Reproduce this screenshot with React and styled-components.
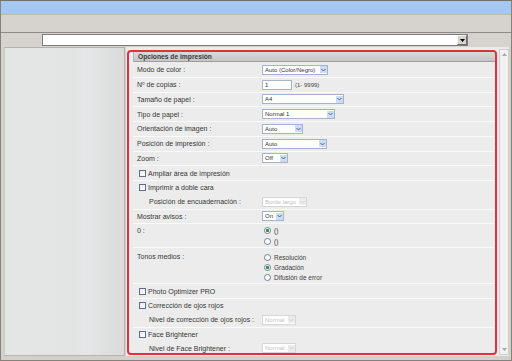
import React from "react";
import styled, { createGlobalStyle } from "styled-components";

const GlobalStyle = createGlobalStyle`
  html, body {
    margin: 0;
    padding: 0;
    background: #d4d0c8;
  }
  body {
    font-family: "Liberation Sans", Arial, sans-serif;
  }
`;

const Window = styled.div`
  box-sizing: border-box;
  width: 512px;
  height: 361px;
  display: flex;
  flex-direction: column;
  background: #d4d0c8;
  border: 1px solid #85827d;
  border-top-color: #6f6f6f;
  overflow: hidden;
`;

const TitleBar = styled.div`
  flex: 0 0 13px;
  height: 13px;
  background: #a5c7f1;
  border-bottom: 1px solid #bdb9b3;
`;

const ToolBand = styled.div`
  flex-shrink: 0;
  height: 17px;
  background: #d6d3ce;
  border-bottom: 1px solid #8e8c89;
`;

const ComboRow = styled.div`
  flex-shrink: 0;
  height: 14px;
  display: flex;
  align-items: center;
  padding-left: 41px;
  background: #d6d3ce;
`;

const ComboBox = styled.div`
  box-sizing: border-box;
  width: 426px;
  height: 12px;
  display: flex;
  justify-content: flex-end;
  background: #fff;
  border: 1px solid #7c7c7c;
`;

const ComboButton = styled.div`
  box-sizing: border-box;
  width: 10px;
  height: 10px;
  display: flex;
  align-items: center;
  justify-content: center;
  background: #d6d3ce;
  border: 1px solid #f4f4f4;
  border-right-color: #6d6d6d;
  border-bottom-color: #6d6d6d;
`;

const Body = styled.div`
  flex: 1;
  display: flex;
  gap: 1px;
  padding: 0 2px 4px 3px;
  min-height: 0;
`;

const LeftPane = styled.div`
  box-sizing: border-box;
  width: 121px;
  background: linear-gradient(
    to right,
    #e4e5e5 0%,
    #e3e4e4 60%,
    #e6e7e8 68%,
    #e1e2e2 78%,
    #dbdbdb 100%
  );
  border: 1px solid #b3b3b3;
  border-left-color: #c9c9c9;
`;

const ContentArea = styled.div`
  flex: 1;
  display: flex;
  background: #ebebeb;
`;

const Panel = styled.div`
  box-sizing: border-box;
  flex: 1;
  margin: 3px 2px 1px 1px;
  padding-left: 4px;
  border: 2px solid #e3303d;
  border-radius: 4px;
  background: #ececec;
  display: flex;
  flex-direction: column;
  overflow: hidden;
`;

const Header = styled.div`
  flex-shrink: 0;
  height: 9px;
  line-height: 9px;
  padding-left: 4px;
  font-size: 6.7px;
  font-weight: bold;
  color: #3a3a3a;
  background: linear-gradient(#dadada, #c6c6c6);
  border-left: 1px solid #b5b5b5;
  border-bottom: 1px solid #9f9f9f;
`;

const Group = styled.div`
  flex-shrink: 0;
  border-top: 1px solid ${(p) => (p.$first ? "transparent" : "#fafafa")};
`;

const Line = styled.div`
  display: grid;
  grid-template-columns: 125px 1fr;
  align-items: center;
  height: 13.75px;
  padding-left: 4px;
`;

const Label = styled.span`
  padding-left: ${(p) => p.$indent || 0}px;
  font-size: 7px;
  color: #363636;
  white-space: nowrap;
`;

const Value = styled.div`
  display: flex;
  align-items: center;
  gap: 3px;
`;

const Select = styled.div`
  box-sizing: border-box;
  width: ${(p) => p.$w}px;
  height: 10px;
  display: flex;
  align-items: center;
  padding-left: 2px;
  background: #fff;
  border: 1px solid ${(p) => (p.$disabled ? "#d6d6d6" : "#a2b4d0")};
  font-size: 6px;
  color: ${(p) => (p.$disabled ? "#c2c2c2" : "#333")};
  white-space: nowrap;
`;

const Arrow = styled.span`
  margin-left: auto;
  margin-right: 0.5px;
  width: 7px;
  height: 7px;
  display: flex;
  align-items: center;
  justify-content: center;
  background: ${(p) => (p.$disabled ? "#ececec" : "#cddcf3")};
`;

const TextInput = styled.div`
  box-sizing: border-box;
  width: 30px;
  height: 10px;
  display: flex;
  align-items: center;
  padding-left: 2px;
  background: #fff;
  border: 1px solid #a7b5cb;
  font-size: 6px;
  color: #333;
`;

const Hint = styled.span`
  font-size: 6px;
  color: #444;
`;

const CheckLine = styled.div`
  display: flex;
  align-items: center;
  gap: 2px;
  height: 13.75px;
  padding-left: 6px;
`;

const Box = styled.span`
  box-sizing: border-box;
  width: 7px;
  height: 7px;
  border: 1px solid #5d6e8f;
  background: linear-gradient(135deg, #e6e9ef, #ffffff);
`;

const RadioRow = styled.div`
  display: grid;
  grid-template-columns: 125px 1fr;
  align-items: start;
  padding: ${(p) => p.$pad};
  padding-left: 4px;
`;

const RadioLabel = styled(Label)`
  line-height: ${(p) => p.$h}px;
`;

const RadioStack = styled.div`
  display: flex;
  flex-direction: column;
  padding-left: 2px;
`;

const RadioItem = styled.div`
  display: flex;
  align-items: center;
  gap: 3px;
  height: ${(p) => p.$h}px;
  font-size: 6.5px;
  color: #3c3c3c;
`;

const Dot = styled.span`
  box-sizing: border-box;
  width: 7px;
  height: 7px;
  border-radius: 50%;
  border: 1px solid #6b7ea0;
  background: ${(p) =>
    p.$on
      ? "radial-gradient(circle, #2f9a3a 0 1.4px, #fff 1.6px)"
      : "#fff"};
`;

const Scrollbar = styled.div`
  box-sizing: border-box;
  width: 10px;
  margin: 2px 0 1px;
  display: flex;
  flex-direction: column;
  justify-content: space-between;
  background: #f1f1f1;
  border: 1px solid #d0d0d0;
`;

const ScrollArrow = styled.div`
  height: 9px;
  display: flex;
  align-items: center;
  justify-content: center;
`;

const Chevron = ({ color }) => (
  <svg width="5" height="4" viewBox="0 0 5 4">
    <path d="M0.5 1 L2.5 3 L4.5 1" fill="none" stroke={color} strokeWidth="1" />
  </svg>
);

const Drop = ({ w, children, disabled }) => (
  <Select $w={w} $disabled={disabled}>
    {children}
    <Arrow $disabled={disabled}>
      <Chevron color={disabled ? "#cfcfcf" : "#3f64ad"} />
    </Arrow>
  </Select>
);

const Field = ({ label, indent, children }) => (
  <Line>
    <Label $indent={indent}>{label}</Label>
    <Value>{children}</Value>
  </Line>
);

const Check = ({ label }) => (
  <CheckLine>
    <Box />
    <Label>{label}</Label>
  </CheckLine>
);

const App = () => {
  return (
    <>
      <GlobalStyle />
      <Window>
        <TitleBar />
        <ToolBand />
        <ComboRow>
          <ComboBox>
            <ComboButton>
              <svg width="5" height="3" viewBox="0 0 5 3">
                <path d="M0 0 H5 L2.5 3 Z" fill="#000" />
              </svg>
            </ComboButton>
          </ComboBox>
        </ComboRow>
        <Body>
          <LeftPane />
          <ContentArea>
            <Panel>
              <Header>Opciones de impresión</Header>
              <Group $first>
                <Field label="Modo de color :">
                  <Drop w={66}>Auto (Color/Negro)</Drop>
                </Field>
              </Group>
              <Group>
                <Field label="Nº de copias :">
                  <TextInput>1</TextInput>
                  <Hint>(1- 9999)</Hint>
                </Field>
              </Group>
              <Group>
                <Field label="Tamaño de papel :">
                  <Drop w={82}>A4</Drop>
                </Field>
              </Group>
              <Group>
                <Field label="Tipo de papel :">
                  <Drop w={73}>Normal 1</Drop>
                </Field>
              </Group>
              <Group>
                <Field label="Orientación de imagen :">
                  <Drop w={41}>Auto</Drop>
                </Field>
              </Group>
              <Group>
                <Field label="Posición de impresión :">
                  <Drop w={65}>Auto</Drop>
                </Field>
              </Group>
              <Group>
                <Field label="Zoom :">
                  <Drop w={26}>Off</Drop>
                </Field>
              </Group>
              <Group>
                <Check label="Ampliar área de impresión" />
              </Group>
              <Group>
                <Check label="Imprimir a doble cara" />
                <Field label="Posición de encuadernación :" indent={12}>
                  <Drop w={45} disabled>
                    Borde largo
                  </Drop>
                </Field>
              </Group>
              <Group>
                <Field label="Mostrar avisos :">
                  <Drop w={22}>On</Drop>
                </Field>
              </Group>
              <Group>
                <RadioRow $pad="1px 0 0">
                  <RadioLabel $h={11}>0 :</RadioLabel>
                  <RadioStack>
                    <RadioItem $h={11}>
                      <Dot $on />
                      ()
                    </RadioItem>
                    <RadioItem $h={11}>
                      <Dot />
                      ()
                    </RadioItem>
                  </RadioStack>
                </RadioRow>
              </Group>
              <Group>
                <RadioRow $pad="4px 0 1px">
                  <RadioLabel $h={10}>Tonos medios :</RadioLabel>
                  <RadioStack>
                    <RadioItem $h={10}>
                      <Dot />
                      Resolución
                    </RadioItem>
                    <RadioItem $h={10}>
                      <Dot $on />
                      Gradación
                    </RadioItem>
                    <RadioItem $h={10}>
                      <Dot />
                      Difusión de error
                    </RadioItem>
                  </RadioStack>
                </RadioRow>
              </Group>
              <Group>
                <Check label="Photo Optimizer PRO" />
              </Group>
              <Group>
                <Check label="Corrección de ojos rojos" />
                <Field label="Nivel de corrección de ojos rojos :" indent={12}>
                  <Drop w={34} disabled>
                    Normal
                  </Drop>
                </Field>
              </Group>
              <Group>
                <Check label="Face Brightener" />
                <Field label="Nivel de Face Brightener :" indent={12}>
                  <Drop w={34} disabled>
                    Normal
                  </Drop>
                </Field>
              </Group>
            </Panel>
            <Scrollbar>
              <ScrollArrow>
                <svg width="5" height="3" viewBox="0 0 5 3">
                  <path d="M0 3 H5 L2.5 0 Z" fill="#a9a9a9" />
                </svg>
              </ScrollArrow>
              <ScrollArrow>
                <svg width="5" height="3" viewBox="0 0 5 3">
                  <path d="M0 0 H5 L2.5 3 Z" fill="#a9a9a9" />
                </svg>
              </ScrollArrow>
            </Scrollbar>
          </ContentArea>
        </Body>
      </Window>
    </>
  );
};

export default App;
